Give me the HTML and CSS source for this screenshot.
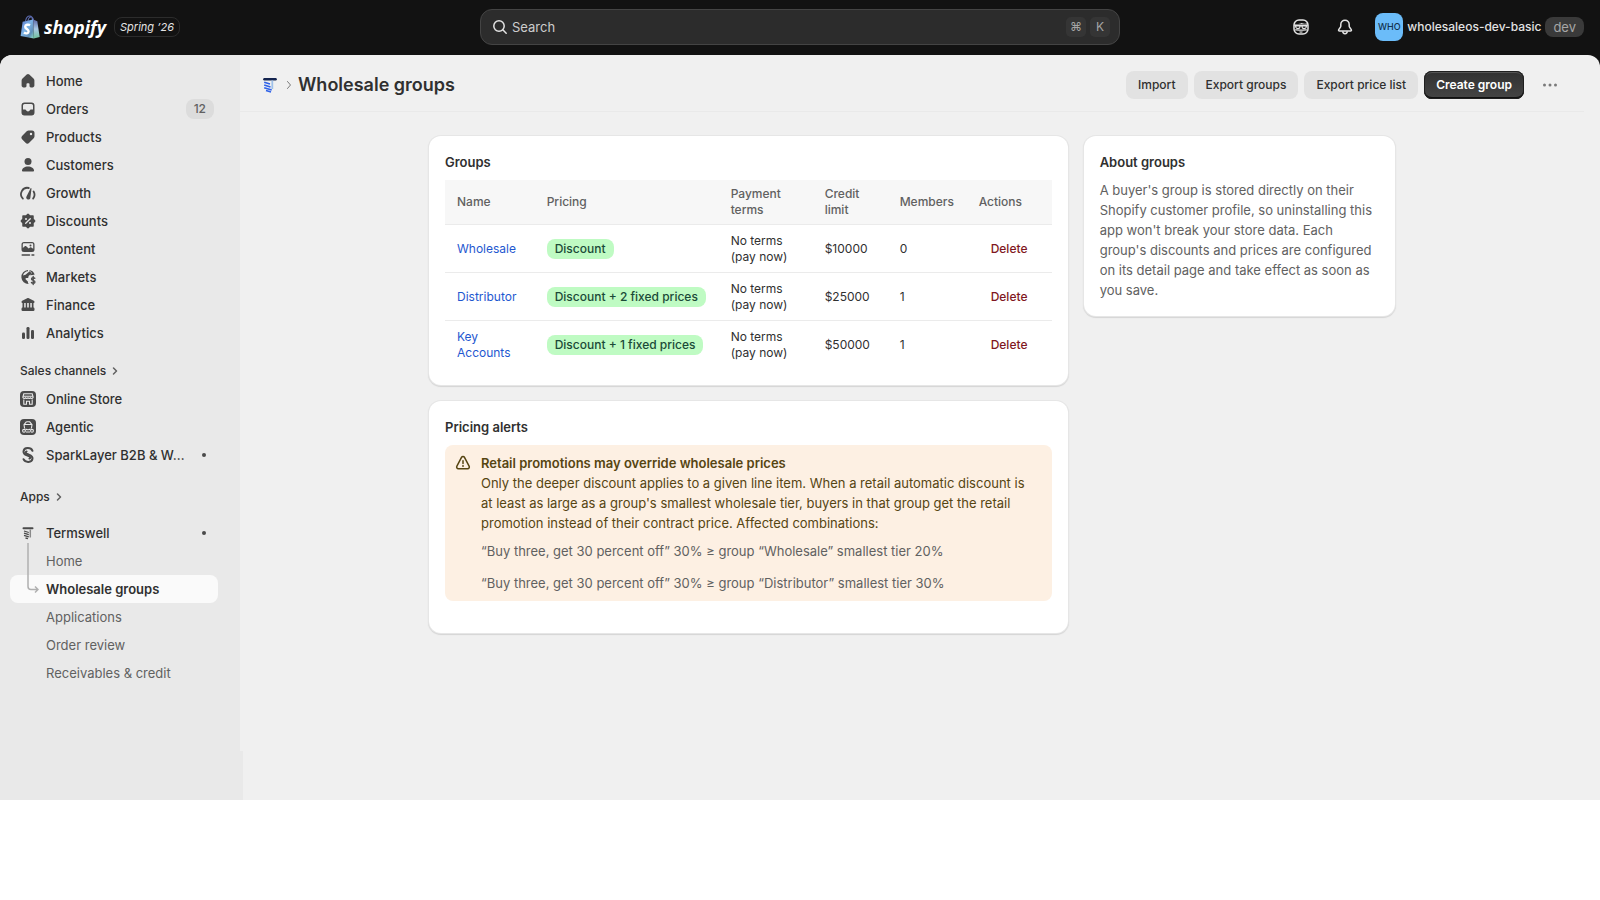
FILE: index.html
```html
<!DOCTYPE html>
<html lang="en">
<head>
    <meta charset="UTF-8">
    <meta name="viewport" content="width=device-width, initial-scale=1.0">
    <title>Wholesale groups</title>
    <link rel="stylesheet" href="styles.css">
</head>
<body>
    <div class="shell">
        <header class="topbar">
            <div class="brand">
                <svg class="brand-bag" viewBox="0 0 20 24">
                    <defs>
                        <linearGradient id="bagFill" x1="0" y1="0" x2="1" y2="1">
                            <stop offset="0" stop-color="#5b74c8"/>
                            <stop offset="0.45" stop-color="#7db4e6"/>
                            <stop offset="0.75" stop-color="#5f8fb8"/>
                            <stop offset="1" stop-color="#8fe0c4"/>
                        </linearGradient>
                        <linearGradient id="bagSide" x1="0" y1="0" x2="0" y2="1">
                            <stop offset="0" stop-color="#5b68a8"/>
                            <stop offset="0.5" stop-color="#a9c8e4"/>
                            <stop offset="1" stop-color="#6fc09a"/>
                        </linearGradient>
                    </defs>
                    <path d="M5.5 6.500C6 3 8 1 9.800 1c2 0 2.700 2 2.700 4.800M8 6C8.200 3.600 9.500 1.800 11.300 2c1.400.2 2 1.800 2.200 3.500" fill="none" stroke="#5d6cb0" stroke-width="1.100"/>
                    <path d="M2.600 6.800L13.200 4.500 13.800 23.500 0.600 21z" fill="url(#bagFill)"/>
                    <path d="M13.200 4.500L17.300 6.200 19.700 22 13.800 23.500z" fill="url(#bagSide)"/>
                    <path d="M10 10.200C8.500 9.300 5.300 9.400 5.200 11.800 5.100 13.900 8.700 14.200 8.600 16.500 8.500 18.600 5.800 18.900 4 17.500" fill="none" stroke="#fff" stroke-width="2.400"/>
                </svg>
                <span class="brand-name">shopify</span>
                <span class="brand-edition">Spring ’26</span>
            </div>

            <div class="search">
                <svg class="icon" viewBox="0 0 20 20"><circle cx="9" cy="9" r="5.200" fill="none" stroke="currentColor" stroke-width="1.500"/><path d="M12.800 12.800L16.200 16.200" stroke="currentColor" stroke-width="1.500" stroke-linecap="round"/></svg>
                <input type="text" class="search-input" placeholder="Search" aria-label="Search">
                <kbd>⌘</kbd>
                <kbd>K</kbd>
            </div>

            <div class="account">
                <button class="top-btn" aria-label="Sidekick">
                    <svg class="icon" viewBox="0 0 20 20" fill="none" stroke="currentColor" stroke-width="1.500"><rect x="3" y="3" width="14" height="14" rx="5"/><path d="M3.200 7.500V6.400C5.500 7.500 8.500 7 10.500 5.900c2 .9 4.300 1 6.300.2V7.500" fill="currentColor" stroke="none"/><path d="M3.300 8.300c4.500.3 9 .3 13.400 0" stroke-width="1.200"/><path d="M4.500 9h4.700l-.6 1.800c-.7 1-2.900 1-3.500 0zM10.800 9h4.700l-.6 1.800c-.6 1-2.800 1-3.500 0z" fill="#121212" stroke-width="1.200"/><path d="M4 13c1.700-.2 4.600.2 6 .2s4.300-.4 6-.2M8.500 14.800c1 .5 2 .5 3 0" stroke-width="1.200"/></svg>
                </button>
                <button class="top-btn" aria-label="Notifications">
                    <svg class="icon" viewBox="0 0 20 20" fill="none" stroke="currentColor" stroke-width="1.500" stroke-linejoin="round"><path d="M10 3.200c-2.500 0-4.200 1.900-4.200 4.300v1.800c0 1.200-2.300 2.700-2.300 4 0 .5.4.7.900.7h11.200c.5 0 .9-.2.9-.7 0-1.300-2.300-2.800-2.300-4V7.500c0-2.400-1.700-4.300-4.200-4.300z"/><path d="M7.800 14.300c0 1.500.9 2.400 2.200 2.400s2.200-.9 2.200-2.400"/></svg>
                </button>
                <button class="store">
                    <span class="avatar">WHO</span>
                    <span class="store-name">wholesaleos-dev-basic</span>
                    <span class="store-plan">dev</span>
                </button>
            </div>
        </header>

        <div class="frame">
            <div class="side">
                <nav class="sidebar">
                    <a class="nav-item" href="#"><svg class="icon" viewBox="0 0 20 20"><path fill="currentColor" d="M8.700 3.500a2 2 0 0 1 2.600 0l4.200 3.900c.6.500.9 1.200.9 2v5.100c0 1.100-.8 1.900-1.900 1.900h-1.600c-.8 0-1.400-.6-1.400-1.400v-2c0-.5-.4-.8-.8-.8h-1.400c-.4 0-.8.3-.8.8v2c0 .8-.6 1.400-1.400 1.400H5.500c-1.100 0-1.900-.8-1.900-1.900V9.400c0-.8.3-1.500.9-2z"/></svg><span>Home</span></a>
                    <a class="nav-item" href="#"><svg class="icon" viewBox="0 0 20 20"><path fill="currentColor" fill-rule="evenodd" d="M6.500 3.500h7a3 3 0 0 1 3 3v7a3 3 0 0 1-3 3h-7a3 3 0 0 1-3-3v-7a3 3 0 0 1 3-3zM6.600 5A1.600 1.600 0 0 0 5 6.600V10.500h2.200c.4 0 .7.200.8.500.3.800 1.100 1.400 2 1.400s1.700-.6 2-1.400c.1-.3.400-.5.800-.5H15V6.600A1.600 1.600 0 0 0 13.400 5z"/></svg><span>Orders</span><span class="nav-count">12</span></a>
                    <a class="nav-item" href="#"><svg class="icon" viewBox="0 0 20 20"><path fill="currentColor" fill-rule="evenodd" d="M10.600 3.500h3.400a2.500 2.500 0 0 1 2.500 2.500v3.200c0 .8-.3 1.500-.8 2l-4.500 4.500a2.600 2.600 0 0 1-3.700 0l-3.200-3.200a2.600 2.600 0 0 1 0-3.700l4.400-4.500c.5-.5 1.200-.8 1.900-.8zM13 8.200a1.200 1.200 0 1 0 0-2.400 1.200 1.200 0 0 0 0 2.400z"/></svg><span>Products</span></a>
                    <a class="nav-item" href="#"><svg class="icon" viewBox="0 0 20 20" fill="currentColor"><circle cx="10" cy="6.500" r="3.500"/><path d="M10 11.500c-3.300 0-6 1.700-6 4 0 .7.500 1 1.100 1h9.800c.6 0 1.100-.3 1.100-1 0-2.300-2.700-4-6-4z"/></svg><span>Customers</span></a>
                    <a class="nav-item" href="#"><svg class="icon" viewBox="0 0 20 20"><path d="M4.900 15.600A6.300 6.300 0 0 1 10.800 5M15.100 15.600A6.300 6.300 0 0 0 15.600 8.500" fill="none" stroke="currentColor" stroke-width="1.800" stroke-linecap="round"/><path fill="currentColor" d="M12.600 5.200c.5-.3 1 0 .9.600l-1.100 8.700a2.100 2.100 0 1 1-3.900-1.100z"/></svg><span>Growth</span></a>
                    <a class="nav-item" href="#"><svg class="icon" viewBox="0 0 20 20"><path fill="currentColor" stroke="currentColor" stroke-width="1.500" stroke-linejoin="round" d="M10 3.300L12 5h3v3l1.700 2L15 12v3h-3l-2 1.700L8 15H5v-3l-1.700-2L5 8V5h3z"/><path d="M7.700 12.300L12.300 7.700" stroke="#e9e9e9" stroke-width="1.300" stroke-linecap="round"/><circle cx="8" cy="8" r="1" fill="#e9e9e9"/><circle cx="12" cy="12" r="1" fill="#e9e9e9"/></svg><span>Discounts</span></a>
                    <a class="nav-item" href="#"><svg class="icon" viewBox="0 0 20 20"><path fill="currentColor" fill-rule="evenodd" d="M6 3h8a2.500 2.500 0 0 1 2.500 2.500v5A2.500 2.500 0 0 1 14 13H6a2.500 2.500 0 0 1-2.500-2.500v-5A2.500 2.500 0 0 1 6 3zm0 1.300c-.7 0-1.200.5-1.200 1.200V9l2-1.700c.4-.4 1-.4 1.400 0l2.500 2.100 1.300-.9c.4-.3.900-.3 1.300 0l1.900 1.300V5.500c0-.7-.5-1.200-1.200-1.200z"/><circle cx="12.500" cy="6.500" r="1" fill="currentColor"/><path d="M4.200 16h7.300M14 16h1.800" stroke="currentColor" stroke-width="1.500" stroke-linecap="round"/></svg><span>Content</span></a>
                    <a class="nav-item" href="#"><svg class="icon" viewBox="0 0 20 20"><path fill="currentColor" d="M10 3a7 7 0 1 0 .8 14c-.8-.6-1-1.500-.8-2.300L7.800 12.600c-.7-.7-.2-1.600.6-1.600h1.100c.6 0 1-.5 1-1V9l2.700-2.200c.4-.4.3-.8 0-1.100L11.500 4.300l-1.300 1.200-2.700 2.300L5 8.500C5.500 6 7.600 4.400 10 4.300z"/><path fill="currentColor" d="M11 3.100L14 6 11.500 8.200l3.200-.1 2-.6A7 7 0 0 0 11 3.100z"/><path d="M16.800 11.200c-.5-.5-1-.6-1.600-.6-1 0-1.700.5-1.700 1.300 0 1.900 3.500 1 3.500 3 0 .9-.8 1.400-1.800 1.400-.7 0-1.400-.3-1.800-.8M15.200 9.500v8" fill="none" stroke="currentColor" stroke-width="1.300" stroke-linecap="round"/></svg><span>Markets</span></a>
                    <a class="nav-item" href="#"><svg class="icon" viewBox="0 0 20 20" fill="currentColor"><path d="M9.200 3.200c.5-.3 1.100-.3 1.600 0l5 2.500c.5.300.7.700.7 1.200 0 .7-.5 1.100-1.100 1.100H4.600c-.6 0-1.100-.4-1.100-1.100 0-.5.200-.9.700-1.200z"/><path d="M4.500 8h1.700v5H4.500zM7.700 8h1.500v5H7.700zM10.800 8h1.500v5h-1.500zM13.800 8h1.700v5h-1.700z"/><rect x="3.500" y="12.500" width="13" height="3.500" rx="1.200"/></svg><span>Finance</span></a>
                    <a class="nav-item" href="#"><svg class="icon" viewBox="0 0 20 20" fill="currentColor"><rect x="4" y="9.500" width="3" height="6.500" rx="1.300"/><rect x="8.500" y="4" width="3" height="12" rx="1.300"/><rect x="13" y="7" width="3" height="9" rx="1.300"/></svg><span>Analytics</span></a>

                    <a class="nav-heading" href="#"><span>Sales channels</span><svg class="chevron" viewBox="0 0 8 10"><path d="M2.500 2L5.500 5 2.500 8"/></svg></a>
                    <a class="nav-item" href="#"><svg class="icon" viewBox="0 0 20 20"><rect x="2" y="2" width="16" height="16" rx="4" fill="currentColor"/><g fill="none" stroke="#e9e9e9" stroke-width="1.100"><path d="M5.800 4.800h8.400l1 3.400a1.500 1.500 0 0 1-2.700.6 1.600 1.600 0 0 1-2.500 0 1.600 1.600 0 0 1-2.500 0 1.500 1.500 0 0 1-2.700-.6zM5.200 7.200h9.600M5.800 10.500v4.700h2.700v-3h3v3h2.700v-4.700"/></g></svg><span>Online Store</span></a>
                    <a class="nav-item" href="#"><svg class="icon" viewBox="0 0 20 20"><rect x="2" y="2" width="16" height="16" rx="4" fill="currentColor"/><g fill="none" stroke="#e9e9e9" stroke-width="1.100"><path d="M8.300 4.800h3.400l2.300 2.900-.6 3.800M6.600 11.500L6 7.700l2.300-2.900M6.500 7.500h7M8 15h4"/><circle cx="6" cy="13.800" r="1.400"/><circle cx="14" cy="13.800" r="1.400"/><path d="M7.500 12c1.500.9 3.500.9 5 0"/></g></svg><span>Agentic</span></a>
                    <a class="nav-item" href="#"><svg class="icon" viewBox="0 0 20 20"><g fill="none" stroke="currentColor" stroke-width="2" stroke-linecap="round" stroke-linejoin="round"><path d="M14.500 5.800C12.800 2 6 2.200 5.500 6.300c-.2 2.200 1.200 3.200 3.500 4.100l2.300 1c1.300.7 1.300 1.900.1 2.200"/><path d="M5.500 14.200C7.200 18 14 17.800 14.500 13.700c.2-2.200-1.200-3.200-3.500-4.100l-2.300-1c-1.300-.7-1.300-1.900-.1-2.200"/></g></svg><span>SparkLayer B2B &amp; W…</span><span class="nav-dot"></span></a>

                    <a class="nav-heading apps" href="#"><span>Apps</span><svg class="chevron" viewBox="0 0 8 10"><path d="M2.500 2L5.500 5 2.500 8"/></svg></a>
                    <a class="nav-item" href="#"><svg class="icon" viewBox="0 0 20 20" fill="none" stroke="currentColor"><path d="M5.500 5.300h9" stroke-width="2" stroke-linecap="round"/><path d="M12.300 6.500v8" stroke="#8a8a8a" stroke-width="1.500"/><path d="M6 8l4.800 1.500M6 10.200l4.800 1.500M6 12.400l4.800 1.500M7.500 15l2.500.6" stroke-width="1.300"/></svg><span>Termswell</span><span class="nav-dot"></span></a>
                    <div class="subnav">
                        <svg class="tree-line" viewBox="0 0 12 52"><path d="M1 0V43.500a3 3 0 0 0 3 3h7M8 43.500l3 3-3 3"/></svg>
                        <a class="nav-item" href="#">Home</a>
                        <a class="nav-item active" href="#">Wholesale groups</a>
                        <a class="nav-item" href="#">Applications</a>
                        <a class="nav-item" href="#">Order review</a>
                        <a class="nav-item" href="#">Receivables &amp; credit</a>
                    </div>
                </nav>
                <div class="side-footer"></div>
            </div>

            <main class="main">
                <div class="page-header">
                    <svg class="app-icon" viewBox="0 0 16 16" fill="none"><path d="M2.400 2.200h11.200" stroke="#14244f" stroke-width="2.400" stroke-linecap="round"/><path d="M10.300 3.500v8.500" stroke="#9dc0ea" stroke-width="1.800"/><path d="M2.200 5.300l5.800 1.800M2.200 8l6.300 2M2.200 10.700l7.500 2.400M4 13.600l5 1.500" stroke="#2f62e8" stroke-width="1.600"/></svg>
                    <svg class="chevron" viewBox="0 0 8 10"><path d="M2.500 1.500L5.500 5 2.500 8.500"/></svg>
                    <h1>Wholesale groups</h1>
                    <div class="page-actions">
                        <button class="btn">Import</button>
                        <button class="btn">Export groups</button>
                        <button class="btn">Export price list</button>
                        <button class="btn btn-primary">Create group</button>
                        <button class="more-btn" aria-label="More actions">
                            <svg class="icon" viewBox="0 0 20 20" fill="currentColor"><circle cx="4.500" cy="10" r="1.500"/><circle cx="10" cy="10" r="1.500"/><circle cx="15.500" cy="10" r="1.500"/></svg>
                        </button>
                    </div>
                </div>

                <div class="layout">
                    <div class="col-main">
                        <section class="card">
                            <h2>Groups</h2>
                            <table class="groups">
                                <colgroup>
                                    <col>
                                    <col class="col-pricing">
                                    <col class="col-terms">
                                    <col class="col-credit">
                                    <col class="col-members">
                                    <col class="col-actions">
                                </colgroup>
                                <thead>
                                    <tr>
                                        <th>Name</th>
                                        <th>Pricing</th>
                                        <th>Payment terms</th>
                                        <th>Credit limit</th>
                                        <th>Members</th>
                                        <th>Actions</th>
                                    </tr>
                                </thead>
                                <tbody>
                                    <tr>
                                        <td><a href="#">Wholesale</a></td>
                                        <td><span class="badge">Discount</span></td>
                                        <td>No terms (pay now)</td>
                                        <td>$10000</td>
                                        <td>0</td>
                                        <td><button class="delete-btn">Delete</button></td>
                                    </tr>
                                    <tr>
                                        <td><a href="#">Distributor</a></td>
                                        <td><span class="badge">Discount + 2 fixed prices</span></td>
                                        <td>No terms (pay now)</td>
                                        <td>$25000</td>
                                        <td>1</td>
                                        <td><button class="delete-btn">Delete</button></td>
                                    </tr>
                                    <tr>
                                        <td><a href="#">Key Accounts</a></td>
                                        <td><span class="badge">Discount + 1 fixed prices</span></td>
                                        <td>No terms (pay now)</td>
                                        <td>$50000</td>
                                        <td>1</td>
                                        <td><button class="delete-btn">Delete</button></td>
                                    </tr>
                                </tbody>
                            </table>
                        </section>

                        <section class="card">
                            <h2>Pricing alerts</h2>
                            <div class="banner">
                                <svg class="icon" viewBox="0 0 20 20" fill="none" stroke="currentColor" stroke-width="1.500" stroke-linecap="round" stroke-linejoin="round"><path d="M8.500 4.300a1.700 1.700 0 0 1 3 0l4.600 8.900c.7 1.300-.1 2.600-1.500 2.600H5.400c-1.400 0-2.200-1.300-1.500-2.600zM10 7.800v2.700"/><path d="M10 13v.1" stroke-width="1.800"/></svg>
                                <div class="banner-body">
                                    <h3>Retail promotions may override wholesale prices</h3>
                                    <p>Only the deeper discount applies to a given line item. When a retail automatic discount is at least as large as a group's smallest wholesale tier, buyers in that group get the retail promotion instead of their contract price. Affected combinations:</p>
                                    <ul>
                                        <li>“Buy three, get 30 percent off” 30% ≥ group “Wholesale” smallest tier 20%</li>
                                        <li>“Buy three, get 30 percent off” 30% ≥ group “Distributor” smallest tier 30%</li>
                                    </ul>
                                </div>
                            </div>
                        </section>
                    </div>

                    <aside class="card col-side">
                        <h2>About groups</h2>
                        <p>A buyer's group is stored directly on their Shopify customer profile, so uninstalling this app won't break your store data. Each group's discounts and prices are configured on its detail page and take effect as soon as you save.</p>
                    </aside>
                </div>
            </main>
        </div>
    </div>
</body>
</html>
```
FILE: styles.css
```css
* {
    box-sizing: border-box;
}
body {
    margin: 0;
    background: #fff;
    font-family: Inter, "Liberation Sans", sans-serif;
    font-size: 13px;
    line-height: 20px;
    color: #303030;
}
h1, h2, h3, p, ul {
    margin: 0;
    padding: 0;
}
a {
    color: inherit;
    text-decoration: none;
}
button, input {
    font: inherit;
    color: inherit;
    border: none;
    background: none;
    padding: 0;
}
button {
    cursor: pointer;
}
.shell {
    display: flex;
    flex-direction: column;
    min-height: calc(100vh - 100px);
    background: #121212;
}
.icon {
    display: block;
    width: 20px;
    height: 20px;
    flex: none;
}
.chevron {
    width: 8px;
    height: 10px;
    flex: none;
    fill: none;
    stroke: #616161;
    stroke-width: 1.5;
    stroke-linecap: round;
    stroke-linejoin: round;
}

/* top bar */
.topbar {
    display: grid;
    grid-template-columns: 1fr 640px 1fr;
    align-items: center;
    height: 55px;
    padding: 0 16px 1px;
    color: #e3e3e3;
}
.brand {
    display: flex;
    align-items: center;
    padding-left: 4px;
}
.brand-bag {
    width: 20px;
    height: 24px;
    margin-right: 4px;
}
.brand-name {
    font-family: "Open Sans", sans-serif;
    font-size: 18px;
    font-weight: 700;
    font-style: italic;
    color: #fff;
}
.brand-edition {
    margin-left: 8px;
    padding: 0 5px;
    border: 1px solid #2c2c2c;
    border-radius: 8px;
    font-size: 11px;
    line-height: 18px;
    font-style: italic;
    font-weight: 450;
}
.search {
    display: flex;
    align-items: center;
    height: 36px;
    padding: 0 9px;
    border: 1px solid #444;
    border-radius: 12px;
    background: #2c2c2c;
}
.search-input {
    flex: 1;
    min-width: 0;
    margin-left: 2px;
    outline: none;
}
.search-input::placeholder {
    color: #ccc;
    opacity: 1;
}
kbd {
    width: 20px;
    margin-left: 4px;
    border-radius: 5px;
    background: #353535;
    font-family: Inter, "DejaVu Sans", sans-serif;
    font-size: 12px;
    text-align: center;
    color: #a6a6a6;
}
.account {
    display: flex;
    align-items: center;
    justify-content: flex-end;
}
.top-btn {
    margin-right: 24px;
}
.store {
    display: flex;
    align-items: center;
    gap: 4px;
    margin-left: -4px;
}
.avatar {
    width: 28px;
    border-radius: 8px;
    background: #6bbcf9;
    font-size: 9px;
    line-height: 28px;
    font-weight: 500;
    color: #12324f;
}
.store-name {
    font-size: 12px;
    font-weight: 550;
}
.store-plan {
    padding: 0 8px;
    border-radius: 8px;
    background: #3a3a3a;
    color: #a6a6a6;
}

/* frame */
.frame {
    flex: 1;
    display: flex;
    border-radius: 12px 12px 0 0;
    overflow: hidden;
    background: #f0f0f0;
}
.side {
    width: 240px;
    flex: none;
    display: flex;
    flex-direction: column;
}
.sidebar {
    flex: 1;
    padding: 12px 22px 12px 10px;
    background: #e9e9e9;
}
.side-footer {
    width: 243px;
    height: 49px;
    background: #e9e9e9;
}
.nav-item {
    display: flex;
    align-items: center;
    height: 28px;
    padding: 0 4px 0 8px;
    border-radius: 8px;
    font-weight: 550;
    white-space: nowrap;
}
.nav-item .icon {
    margin-right: 8px;
    color: #4a4a4a;
}
.nav-count {
    margin-left: auto;
    padding: 0 8px;
    border-radius: 8px;
    background: #dcdcdc;
    font-size: 12px;
    font-weight: 500;
    color: #616161;
}
.nav-dot {
    width: 4px;
    height: 4px;
    margin-left: auto;
    margin-right: 8px;
    border-radius: 50%;
    background: #4a4a4a;
}
.nav-heading {
    display: flex;
    align-items: center;
    gap: 5px;
    height: 28px;
    margin-top: 10px;
    padding-left: 10px;
    font-size: 12px;
    font-weight: 550;
}
.nav-heading.apps {
    margin: 14px 0 8px;
}
.subnav {
    position: relative;
}
.subnav .nav-item {
    padding-left: 36px;
    font-weight: 400;
    color: #616161;
}
.subnav .nav-item.active {
    background: #fafafa;
    font-weight: 600;
    color: #303030;
}
.tree-line {
    position: absolute;
    left: 17px;
    top: -4px;
    width: 12px;
    height: 52px;
    fill: none;
    stroke: #b0b0b0;
    stroke-width: 1.5;
}

/* page */
.main {
    flex: 1;
    min-width: 0;
    padding-right: 16px;
}
.page-header {
    display: flex;
    align-items: center;
    height: 57px;
    padding: 4px 20px 0 22px;
    border-bottom: 1px solid #e9e9e9;
}
.app-icon {
    width: 16px;
    height: 16px;
}
.page-header > .chevron {
    margin: 0 5px 0 7px;
    stroke: #7a7a7a;
    stroke-width: 1;
}
h1 {
    font-size: 18px;
    line-height: 24px;
    font-weight: 600;
}
.page-actions {
    display: flex;
    gap: 6px;
    margin-left: auto;
}
.btn {
    height: 28px;
    padding: 0 12px;
    border-radius: 8px;
    background: #e2e2e2;
    font-size: 12px;
    font-weight: 550;
}
.btn-primary {
    background: linear-gradient(#303030, #454545);
    box-shadow: inset 0 0 0 1px #1f1f1f, inset 0 2px 0 #555, inset 0 -2px 0 #111;
    font-weight: 600;
    color: #fff;
}
.more-btn {
    margin-left: 6px;
    padding: 4px;
    color: #7a7a7a;
}
.layout {
    display: grid;
    grid-template-columns: repeat(12, 1fr);
    gap: 16px;
    align-items: start;
    max-width: 998px;
    margin: 0 auto;
    padding: 24px 16px;
}
.col-main {
    grid-column: span 8;
    display: grid;
    gap: 16px;
}
.col-side {
    grid-column: span 4;
}
.card {
    padding: 16px;
    border-radius: 12px;
    background: #fff;
    box-shadow: 0 0 0 1px #e6e6e6, 0 1px 1px 1px #d4d4d4;
}
.card h2 {
    margin-bottom: 8px;
    font-size: 13px;
    line-height: 20px;
    font-weight: 600;
}
.col-side p {
    color: #616161;
}

/* groups table */
.groups {
    width: 100%;
    table-layout: fixed;
    border-collapse: separate;
    border-spacing: 0;
    font-size: 12px;
    line-height: 16px;
}
.groups th {
    padding: 6px 12px;
    border-bottom: 1px solid #ebebeb;
    background: #f7f7f7;
    text-align: left;
    font-weight: 550;
    color: #616161;
}
.groups td {
    height: 48px;
    padding: 7px 12px;
    border-bottom: 1px solid #ebebeb;
}
.groups tbody tr:last-child td {
    border-bottom: none;
}
.groups a {
    color: #1f58d0;
}
.col-pricing {
    width: 184px;
}
.col-terms {
    width: 94px;
}
.col-credit {
    width: 75px;
}
.col-members {
    width: 79px;
}
.col-actions {
    width: 85px;
}
.badge {
    display: inline-block;
    padding: 0 8px;
    border-radius: 8px;
    background: #bffbc3;
    line-height: 20px;
    font-weight: 550;
    color: #1b4a38;
    white-space: nowrap;
}
.delete-btn {
    padding: 0 12px;
    font-weight: 550;
    color: #7f1722;
}

/* banner */
.banner {
    display: flex;
    gap: 8px;
    margin-bottom: 16px;
    padding: 8px 16px 8px 8px;
    border-radius: 8px;
    background: #fdf0e3;
    color: #564512;
}
.banner h3 {
    font-size: 13px;
    font-weight: 600;
}
.banner ul {
    display: grid;
    gap: 12px;
    margin-top: 8px;
    list-style: none;
    color: #616161;
}
```
